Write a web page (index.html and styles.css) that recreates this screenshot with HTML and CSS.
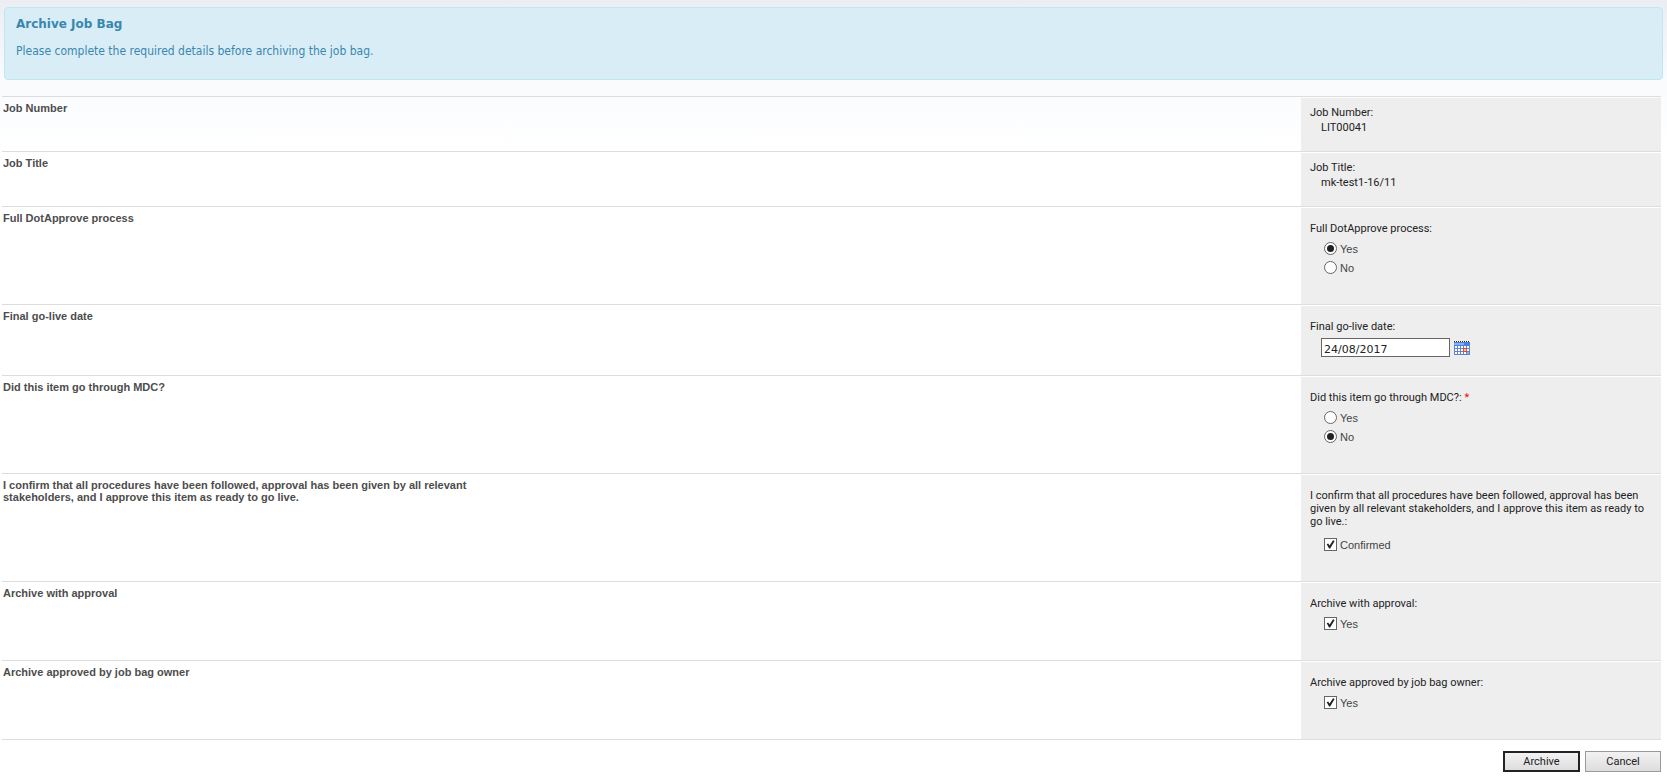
FILE: index.html
```
<!DOCTYPE html>
<html lang="en">
<head>
    <meta charset="utf-8">
    <title>Archive Job Bag</title>
    <link rel="stylesheet" href="styles.css">
</head>
<body>
    <div class="alert">
        <h1>Archive Job Bag</h1>
        <p>Please complete the required details before archiving the job bag.</p>
    </div>

    <form class="archive-form" action="#" method="post">
        <div class="row">
            <h2>Job Number</h2>
            <div class="field field-text">
                <span class="label">Job Number:</span>
                <span class="value">LIT00041</span>
            </div>
        </div>
        <div class="row">
            <h2>Job Title</h2>
            <div class="field field-text">
                <span class="label">Job Title:</span>
                <span class="value">mk-test1-16/11</span>
            </div>
        </div>
        <div class="row">
            <h2>Full DotApprove process</h2>
            <div class="field" role="radiogroup" aria-labelledby="process-label">
                <span class="label" id="process-label">Full DotApprove process:</span>
                <div class="options">
                    <label><input type="radio" name="process" value="yes" checked>Yes</label>
                    <label><input type="radio" name="process" value="no">No</label>
                </div>
            </div>
        </div>
        <div class="row">
            <h2>Final go-live date</h2>
            <div class="field field-date">
                <label class="label" for="golive">Final go-live date:</label>
                <div class="date">
                    <input type="text" id="golive" name="golive" value="24/08/2017">
                    <button type="button" class="calendar" aria-label="Choose date">
                        <svg width="16" height="14" viewBox="0 0 16 14" shape-rendering="crispEdges">
                            <rect x="0" y="1" width="16" height="13" fill="#5f86cc"/>
                            <rect x="0" y="1" width="16" height="4" fill="#4f80e0"/>
                            <rect x="0" y="2" width="10" height="2" fill="#86aef5"/>
                            <path d="M0 .5h16" stroke="#fff"/>
                            <path d="M0 .5h16" stroke="#222" stroke-dasharray="1 1"/>
                            <path d="M1 5h2v2H1zM4 5h2v2H4zM7 5h2v2H7zM10 5h2v2h-2zM13 5h2v2h-2zM1 8h2v2H1zM4 8h2v2H4zM7 8h2v2H7zM13 8h2v2h-2zM1 11h2v2H1zM4 11h2v2H4zM7 11h2v2H7zM10 11h2v2h-2z" fill="#fff"/>
                            <path d="M13 11h2v2h-2z" fill="#8fb0e8"/>
                            <rect x="9" y="7" width="4" height="4" fill="#e8482a"/>
                            <rect x="10" y="8" width="2" height="2" fill="#ffc9b0"/>
                        </svg>
                    </button>
                </div>
            </div>
        </div>
        <div class="row">
            <h2>Did this item go through MDC?</h2>
            <div class="field" role="radiogroup" aria-labelledby="mdc-label">
                <span class="label" id="mdc-label">Did this item go through MDC?: <span class="required">*</span></span>
                <div class="options">
                    <label><input type="radio" name="mdc" value="yes">Yes</label>
                    <label><input type="radio" name="mdc" value="no" checked>No</label>
                </div>
            </div>
        </div>
        <div class="row">
            <h2>I confirm that all procedures have been followed, approval has been given by all relevant stakeholders, and I approve this item as ready to go live.</h2>
            <div class="field field-long">
                <span class="label">I confirm that all procedures have been followed, approval has been given by all relevant stakeholders, and I approve this item as ready to go live.:</span>
                <div class="options">
                    <label><input type="checkbox" name="confirmed" checked>Confirmed</label>
                </div>
            </div>
        </div>
        <div class="row">
            <h2>Archive with approval</h2>
            <div class="field">
                <span class="label">Archive with approval:</span>
                <div class="options">
                    <label><input type="checkbox" name="approval" checked>Yes</label>
                </div>
            </div>
        </div>
        <div class="row">
            <h2>Archive approved by job bag owner</h2>
            <div class="field">
                <span class="label">Archive approved by job bag owner:</span>
                <div class="options">
                    <label><input type="checkbox" name="owner" checked>Yes</label>
                </div>
            </div>
        </div>
        <div class="buttons">
            <button type="submit" class="btn btn-default">Archive</button>
            <button type="button" class="btn">Cancel</button>
        </div>
    </form>
</body>
</html>
```
FILE: styles.css
```
*{
    box-sizing: border-box;
}
body{
    margin: 0;
    padding: 7px 4px 0 2px;
    background: #fff linear-gradient(#ebedf2, #f9fbfd 80px, #fff 150px) no-repeat;
    color: #222;
    font-family: Tahoma, Roboto, sans-serif;
    font-size: 11px;
    line-height: 13px;
}
h1, h2, p{
    margin: 0;
}

/* info box */
.alert{
    margin-left: 2px;
    padding: 8px 11px 20px;
    background: #d9edf7;
    border: 1px solid #bce8f1;
    border-radius: 4px;
    color: #3a87ad;
}
.alert h1{
    font: bold 12px/16px Verdana, "DejaVu Sans", sans-serif;
}
.alert p{
    margin-top: 12px;
    font: 12px/15px Tahoma, "DejaVu Sans Condensed", sans-serif;
}

/* form rows */
.archive-form{
    margin: 16px 2px 0 0;
}
.row{
    display: flex;
    justify-content: space-between;
    padding-top: 1px;
    border-top: 1px solid #ddd;
}
.row h2{
    max-width: 480px;
    padding: 4px 0 0 1px;
    color: #4d4d4d;
    font: bold 11px/12px Arial, "Liberation Sans", sans-serif;
}
.field{
    display: flex;
    flex-direction: column;
    gap: 5px;
    width: 360px;
    padding: 14px 12px 26px 9px;
    background: #eee;
}
.field-text{
    gap: 2px;
    padding-top: 8px;
    padding-bottom: 17px;
}
.field-date{
    padding-bottom: 18px;
}
.field-long{
    gap: 8px;
}
.value{
    padding-left: 11px;
}
.required{
    color: #f00;
}

.options{
    padding-left: 14px;
    color: #444;
    font-family: Arial, "Liberation Sans", sans-serif;
}
.options label{
    display: flex;
    align-items: center;
    gap: 3px;
    height: 19px;
}
.options input{
    appearance: none;
    display: grid;
    place-items: center;
    width: 13px;
    height: 13px;
    margin: 0 0 2px;
    background: #fff;
    border: 1px solid #666;
}
.options input[type="radio"]{
    border-radius: 50%;
}
.options input[type="radio"]:checked::before{
    content: "";
    width: 7px;
    height: 7px;
    border-radius: 50%;
    background: #222;
}
.options input[type="checkbox"]:checked::before{
    content: "";
    width: 9px;
    height: 9px;
    background: #222;
    clip-path: polygon(8% 46%, 24% 38%, 40% 62%, 78% 4%, 96% 12%, 46% 94%, 34% 94%);
}

.date{
    display: flex;
    align-items: center;
    gap: 4px;
    padding-left: 11px;
}
.date input{
    width: 129px;
    height: 19px;
    padding: 3px 2px 0;
    border: 1px solid #666;
    background: #fff;
    color: #222;
    font: 11px Verdana, "DejaVu Sans", sans-serif;
}
.calendar{
    display: flex;
    padding: 0;
    border: 0;
    background: none;
}

.buttons{
    display: flex;
    justify-content: flex-end;
    gap: 5px;
    padding-top: 11px;
    border-top: 1px solid #ddd;
}
.btn{
    width: 76px;
    height: 21px;
    padding: 0;
    border: 1px solid #999;
    background: linear-gradient(#f2f2f2, #ddd);
    color: #222;
    font: inherit;
}
.btn-default{
    width: 77px;
    border: 2px solid #222;
}
```
